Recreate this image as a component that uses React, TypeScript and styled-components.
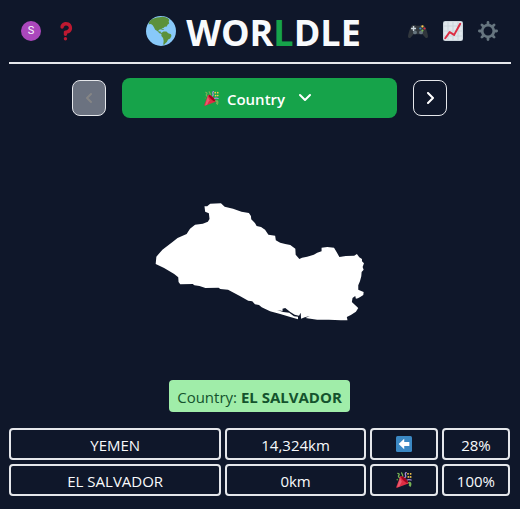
import React from "react";
import styled, { createGlobalStyle } from "styled-components";

const Global = createGlobalStyle`
  *, *::before, *::after { box-sizing: border-box; }
  body {
    margin: 0;
    background: #0f172a;
    color: #f8fafc;
    font-family: "Segoe UI", "Open Sans", "Noto Sans", sans-serif;
    font-size: 15px;
    line-height: 24px;
  }
  button { font: inherit; color: inherit; cursor: pointer; }
`;

const Page = styled.div`
  max-width: 520px;
  margin: 0 auto;
  padding: 0 9px 12px;
`;

const Header = styled.header`
  display: flex;
  align-items: center;
  justify-content: space-between;
  height: 64px;
  padding: 0 13px 0 12px;
  border-bottom: 2px solid #e5e7eb;
`;

const Actions = styled.div`
  display: flex;
  align-items: center;
  gap: 15px;
  min-width: 78px;
`;

const IconButton = styled.button`
  display: grid;
  place-items: center;
  width: 20px;
  height: 28px;
  padding: 0;
  border: 0;
  background: none;
`;

const Avatar = styled.span`
  display: grid;
  place-items: center;
  width: 20px;
  height: 20px;
  border-radius: 50%;
  background: #ab47bc;
  font: 11px/20px Roboto, sans-serif;
`;

const Title = styled.h1`
  display: flex;
  align-items: center;
  gap: 10px;
  margin: 0;
  font-size: 36px;
  line-height: 40px;
  font-weight: 700;
`;

const TitleText = styled.span`
  padding-top: 4px;
`;

const Accent = styled.span`
  color: #16a34a;
`;

const Main = styled.main`
  padding-right: 1px;
`;

const Rounds = styled.nav`
  display: flex;
  align-items: center;
  gap: 16px;
  width: 75%;
  margin: 14px auto 0;
`;

const StepButton = styled.button`
  display: grid;
  place-items: center;
  flex: none;
  width: 34px;
  height: 36px;
  padding: 0;
  border: 1px solid #e5e7eb;
  border-radius: 8px;
  background: transparent;
  color: #fff;
  &:disabled { background: #6b7280; color: #858585; cursor: default; }
`;

const RoundButton = styled.button`
  display: flex;
  flex: 1;
  align-items: center;
  justify-content: center;
  height: 40px;
  padding: 0 4px 0 0;
  border: 0;
  border-radius: 8px;
  background: #16a34a;
  color: #fff;
  font-weight: 600;
`;

const RoundName = styled.span`
  margin: 0 14px 0 8px;
  padding-top: 1px;
`;

const MapArea = styled.div`
  display: grid;
  place-items: center;
  height: 262px;
  padding-top: 25px;
`;

const Answer = styled.p`
  width: fit-content;
  margin: 0 auto 16px;
  padding: 5px 8px 3px;
  border-radius: 4px;
  background: #a0eda9;
  color: #14532d;
`;

const Guesses = styled.table`
  display: block;
`;

const GuessBody = styled.tbody`
  display: grid;
  gap: 4px;
`;

const GuessRow = styled.tr`
  display: grid;
  grid-template-columns: repeat(7, 1fr);
  gap: 4px;
`;

const GuessCell = styled.td<{ $span?: number }>`
  display: flex;
  align-items: center;
  justify-content: center;
  grid-column: span ${(p) => p.$span ?? 1};
  height: 32px;
  padding: 2px 0 0;
  border: 2px solid #e5e7eb;
  border-radius: 4px;
`;

const EmojiCell = styled(GuessCell)`
  padding: 0;
`;

function Globe() {
  return (
    <svg width="30" height="30" viewBox="0 0 36 36" aria-hidden="true">
      <circle cx="18" cy="18" r="18" fill="#88c9f9" />
      <path
        fill="#5c913b"
        d="M4.500 6C8 3 12 1.500 16 1.500l3.500-.5 4 .5c2 .7 3.500 1.700 4.500 3l-.8 2 .6 2.500-2 1.500-.8 2-2.500.5-1.500 1.500-2 .5-.3 1.500-1.700-.5-2 1 .2 1.500 2-.2.6 1.500 1.800 1-.5.8-3-1-2.600-2.600-2.500-1.500-1.500-3-1.500-2.500-2-1.500-3 .3z"
      />
      <path
        fill="#5c913b"
        d="M18.500 20.500l2.500-2 3.500.2 2.200 2 3.300 1.300.5 2-1.500 3-2.500 1.300-1.500 3-2 1.700-1.500 1.700-.8-.7.5-4-.7-3.500-2-2.500z"
      />
      <path fill="#5c913b" d="M18.500 15.500l2 .2 1.300 1-1.600.2z" />
    </svg>
  );
}

function Question() {
  return (
    <svg width="20" height="20" viewBox="0 0 36 36" aria-hidden="true">
      <path
        fill="#be1931"
        d="M17 27c-1.657 0-3-1.343-3-3v-4c0-1.657 1.343-3 3-3 .603-.006 6-1 6-5 0-2-2-4-5-4-2.441 0-4 2-4 3 0 1.657-1.343 3-3 3s-3-1.343-3-3c0-4.878 4.580-9 10-9 8 0 11 5.982 11 11 0 4.145-2.277 7.313-6.413 8.920-.9.351-1.790.587-2.587.747V24c0 1.657-1.343 3-3 3z"
      />
      <circle cx="17" cy="32" r="3" fill="#be1931" />
    </svg>
  );
}

function Gamepad() {
  return (
    <svg width="20" height="20" viewBox="0 0 36 36" aria-hidden="true">
      <path
        fill="#31373d"
        d="M6 9.500L8 7h5l2 1.500h6L23 7h5l2 2.500c3 5 5.500 13 6 18 0 3-2.500 4-4.500 2.500L26 24H10l-5.500 6C2.500 31.500 0 30.500 0 27.500c.5-5 3-13 6-18z"
      />
      <path fill="#ccd6dd" d="M8.700 9h2.600v3.200h3.200v2.600h-3.200V18H8.700v-3.200H5.500v-2.600h3.200z" />
      <circle cx="12.500" cy="20.500" r="3.500" fill="#66757f" />
      <circle cx="23.500" cy="20.500" r="3.500" fill="#66757f" />
      <circle cx="26" cy="9.800" r="2" fill="#ffcc4d" />
      <circle cx="22.200" cy="13.500" r="2" fill="#3b88c3" />
      <circle cx="29.800" cy="13.500" r="2" fill="#dd2e44" />
      <circle cx="26" cy="17.200" r="2" fill="#77b255" />
    </svg>
  );
}

function Chart() {
  return (
    <svg width="20" height="20" viewBox="0 0 36 36" aria-hidden="true">
      <rect width="36" height="36" rx="4" fill="#ccd6dd" />
      <path
        fill="#e1e8ed"
        d="M2 2h6v6H2zM10 2h7v6h-7zM19 2h7v6h-7zM28 2h6v6h-6zM2 10h6v7H2zM10 10h7v7h-7zM19 10h7v7h-7zM28 10h6v7h-6zM2 19h6v7H2zM10 19h7v7h-7zM19 19h7v7h-7zM28 19h6v7h-6zM2 28h6v6H2zM10 28h7v6h-7zM19 28h7v6h-7zM28 28h6v6h-6z"
      />
      <path
        d="M4 31l8-11 8 5L31 5"
        fill="none"
        stroke="#dd2e44"
        strokeWidth="3.600"
        strokeLinecap="round"
        strokeLinejoin="round"
      />
    </svg>
  );
}

function Gear() {
  return (
    <svg width="20" height="20" viewBox="0 0 36 36" aria-hidden="true">
      <g fill="none" stroke="#66757f">
        <circle cx="18" cy="18" r="10.500" strokeWidth="5" />
        <path
          strokeWidth="5"
          strokeLinecap="round"
          d="M18 2.500V6M18 30v3.500M2.500 18H6M30 18h3.500M7 7l2.500 2.500M26.500 26.500L29 29M7 29l2.500-2.500M26.500 9.500L29 7"
        />
      </g>
    </svg>
  );
}

function Party({ size }: { size: number }) {
  return (
    <svg width={size} height={size} viewBox="0 0 36 36" aria-hidden="true">
      <g fill="none" strokeWidth="2.800" strokeLinecap="round">
        <path d="M13 14c4-3 2-8-.5-12M4 3c4 1 4 3 2 5s1 4 2 5" stroke="#77b255" />
        <path d="M18 16c-1-5 5-3 4-7s-3-6 1-8" stroke="#aa8dd8" />
        <path d="M22 20c4-4 7-4 12-2" stroke="#aa8dd8" />
        <path d="M25 25c4-3 8 1 5 5M31 23c3 1 3 6 1 9" stroke="#77b255" />
      </g>
      <path fill="#dd2e44" d="M10 9L.6 33.500c-.5 1.500.5 2.400 1.900 1.900L28 26c-1-7-10-16-18-17z" />
      <path fill="#ea596e" d="M9 13L2.500 34.500l5-1.800L13 22z" />
      <ellipse cx="19" cy="17" rx="3" ry="10" transform="rotate(-45 19 17)" fill="#a0041e" />
      <g fill="#ffcc4d">
        <circle cx="27" cy="4" r="2" />
        <circle cx="33" cy="4" r="2" />
        <circle cx="28" cy="11" r="2.200" />
        <circle cx="33" cy="11" r="2" />
      </g>
      <circle cx="3" cy="17" r="2" fill="#5c913b" />
    </svg>
  );
}

function ArrowLeft() {
  return (
    <svg width="16" height="16" viewBox="0 0 36 36" role="img" aria-label="West">
      <rect width="36" height="36" rx="3.500" fill="#3b88c3" />
      <path fill="#fff" d="M18.500 6v7.500H30v9H18.500V30L6 18z" />
    </svg>
  );
}

function Chevron({ d }: { d: string }) {
  return (
    <svg width="12" height="12" viewBox="0 0 12 12" aria-hidden="true">
      <path d={d} fill="none" stroke="currentColor" strokeWidth="2" strokeLinecap="round" strokeLinejoin="round" />
    </svg>
  );
}

function CountryShape() {
  return (
    <svg width="212" height="120" viewBox="15 22 630 360" preserveAspectRatio="none" role="img" aria-label="Country outline">
      <path
        fill="#fff"
        d="M165 35L173 35 182 27 214 26 225 36 250 42 275 51 297 55 303 64 304 74 315 85 320 94 333 97 345 105 355 120 375 123 377 137 390 144 405 148 420 151 435 162 436 180 447 193 455 189 470 186 490 180 500 174 513 170 513 159 530 157 550 159 558 173 566 187 585 184 610 183 618 178 625 188 633 193 633 200 639 206 635 217 638 225 632 232 631 245 627 260 622 272 622 285 629 288 638 292 637 301 629 306 621 311 615 312 613 304 605 310 603 322 610 329 622 340 615 351 600 361 588 367 590 377 570 377 535 375 500 375 465 370 478 364 463 368 452 372 451 354 446 363 433 360 420 352 405 340 397 342 397 349 381 346 399 352 417 354 431 365 443 366 443 374 420 367 390 358 360 350 335 338 327 331 315 329 307 320 295 318 270 304 235 285 212 283 207 279 168 280 150 274 135 272 130 268 93 269 88 262 87 248 75 238 45 220 20 208 22 186 40 165 70 142 85 130 112 118 122 102 137 90 160 87 175 81 180 73 178 56 167 51z"
      />
    </svg>
  );
}

const guesses = [
  { name: "YEMEN", distance: "14,324km", icon: <ArrowLeft />, score: "28%" },
  { name: "EL SALVADOR", distance: "0km", icon: <Party size={16} />, score: "100%" },
];

export default function App() {
  return (
    <>
      <Global />
      <Page>
        <Header>
          <Actions>
            <IconButton aria-label="Account"><Avatar>S</Avatar></IconButton>
            <IconButton aria-label="How to play"><Question /></IconButton>
          </Actions>
          <Title>
            <Globe />
            <TitleText>WOR<Accent>L</Accent>DLE</TitleText>
          </Title>
          <Actions>
            <IconButton aria-label="Games"><Gamepad /></IconButton>
            <IconButton aria-label="Statistics"><Chart /></IconButton>
            <IconButton aria-label="Settings"><Gear /></IconButton>
          </Actions>
        </Header>
        <Main>
          <Rounds>
            <StepButton disabled aria-label="Previous round"><Chevron d="M8 2L4 6l4 4" /></StepButton>
            <RoundButton>
              <Party size={15} />
              <RoundName>Country</RoundName>
              <Chevron d="M1 3l5 5 5-5" />
            </RoundButton>
            <StepButton aria-label="Next round"><Chevron d="M4 1l5 5-5 5" /></StepButton>
          </Rounds>
          <MapArea><CountryShape /></MapArea>
          <Answer>Country: <strong>EL SALVADOR</strong></Answer>
          <Guesses aria-label="Guesses">
            <GuessBody>
              {guesses.map((g) => (
                <GuessRow key={g.name}>
                  <GuessCell $span={3}>{g.name}</GuessCell>
                  <GuessCell $span={2}>{g.distance}</GuessCell>
                  <EmojiCell>{g.icon}</EmojiCell>
                  <GuessCell>{g.score}</GuessCell>
                </GuessRow>
              ))}
            </GuessBody>
          </Guesses>
        </Main>
      </Page>
    </>
  );
}
